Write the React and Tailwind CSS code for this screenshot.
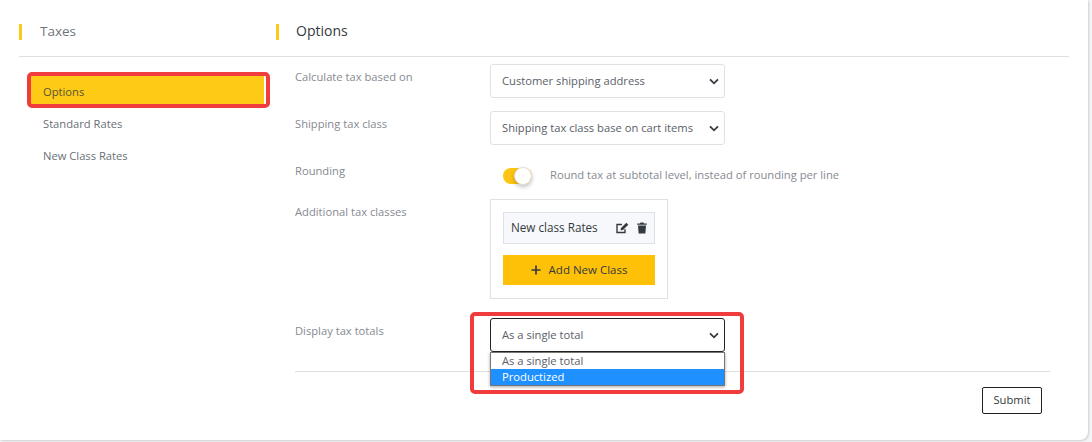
const font = { fontFamily: '"Open Sans", sans-serif' };

function Chevron() {
  return (
    <svg width="10" height="7" viewBox="0 0 12 8" fill="none" className="shrink-0">
      <path d="M1.2 1.5 L6 6.2 L10.8 1.5" stroke="#343a40" strokeWidth="2.2" />
    </svg>
  );
}

function Select({ children, dark }) {
  return (
    <div className={`flex h-[34px] w-[235px] items-center justify-between rounded-[3px] border bg-white pl-[11px] pr-[3px] text-[11.2px] text-[#5a6068] ${dark ? 'border-[#222]' : 'border-[#dee2e6]'}`}>
      <span>{children}</span>
      <span className="flex w-[14px] justify-center"><Chevron /></span>
    </div>
  );
}

function Row({ label, labelClass, children, className }) {
  return (
    <div className={`flex ${className}`}>
      <div className={`w-[195px] shrink-0 text-[11.2px] leading-[16px] text-[#868a91] ${labelClass}`}>{label}</div>
      {children}
    </div>
  );
}

export default function App() {
  return (
    <div style={font} className="h-[442px] w-[1092px] overflow-hidden bg-[#f3f4f6]">
      <div className="relative h-[440px] w-[1088px] rounded-br-[8px] bg-white pl-[19px] pt-[24px] shadow-[1px_1px_2px_rgba(0,0,0,0.15)]">
        <div className="flex h-[33px] w-[1050px] border-b border-[#dfdfdf]">
          <div className="h-[16px] w-[257px] border-l-[3px] border-[#fbc91a] pl-[18px] text-[13.5px] font-medium leading-[14px] text-[#6c757d]">Taxes</div>
          <div className="h-[16px] border-l-[3px] border-[#fbc91a] pl-[17px] text-[14px] font-medium leading-[14px] text-[#343a40]">Options</div>
        </div>

        <div className="flex">
          <nav className="w-[276px] shrink-0 pl-[12px] pr-[8px] pt-[19px] text-[11.2px] text-[#6b6f75]">
            <div className="flex h-[32px] w-[235px] items-center border-r-2 border-white bg-[#fdca16] pl-[12px] text-[#5a5338]">Options</div>
            <div className="flex h-[32px] items-center pl-[12px]">Standard Rates</div>
            <div className="flex h-[32px] items-center pl-[12px]">New Class Rates</div>
          </nav>

          <div className="w-[755px] pt-[7px]">
            <Row label="Calculate tax based on" labelClass="pt-[5px]" className="h-[47px]">
              <Select>Customer shipping address</Select>
            </Row>
            <Row label="Shipping tax class" labelClass="pt-[5px]" className="h-[47px]">
              <Select>Shipping tax class base on cart items</Select>
            </Row>
            <Row label="Rounding" labelClass="pt-[5px]" className="h-[41px]">
              <div className="ml-[13px] mt-[9px] flex h-[18px] items-center">
                <div className="relative h-[16px] w-[29px] rounded-full bg-[#fdc513]">
                  <div className="absolute right-0 top-[-1px] h-[18px] w-[18px] rounded-full border border-[#e6e0cf] bg-white shadow-[0_2px_4px_rgba(0,0,0,0.25)]" />
                </div>
                <span className="ml-[18px] -translate-y-[1px] text-[11.2px] text-[#868a91]">Round tax at subtotal level, instead of rounding per line</span>
              </div>
            </Row>
            <Row label="Additional tax classes" labelClass="pt-[5px]" className="h-[119px]">
              <div className="h-[100px] w-[178px] border border-[#dee2e6] p-[12px]">
                <div className="flex h-[32px] w-[152px] items-center justify-between border border-[#dee2e6] bg-[#f6f8fb] pl-[7px] pr-[7px] text-[11.7px] text-[#343a40]">
                  <span>New class Rates</span>
                  <span className="flex items-center gap-[8px]">
                    <svg width="13" height="12" viewBox="0 0 13 12" fill="none">
                      <path d="M9 7.2V10.5H1V2.5H6" stroke="#343a40" strokeWidth="1.4" />
                      <path d="M4.5 8.3L5 6L10.3 0.7L12.3 2.7L7 8L4.5 8.3Z" fill="#343a40" />
                    </svg>
                    <svg width="10" height="12" viewBox="0 0 10 12">
                      <path d="M0.2 1.5H3L3.5 0.4H6.5L7 1.5H9.8V2.8H0.2ZM1 3.6H9L8.4 11.6H1.6Z" fill="#343a40" />
                    </svg>
                  </span>
                </div>
                <div className="mt-[11px] flex h-[30px] items-center justify-center gap-[8px] bg-[#ffc107] text-[11.5px] text-[#343a40]">
                  <svg width="10" height="10" viewBox="0 0 10 10"><path d="M5 0.5V9.5M0.5 5H9.5" stroke="#343a40" strokeWidth="1.7" /></svg>
                  <span>Add New Class</span>
                </div>
              </div>
            </Row>
            <Row label="Display tax totals" labelClass="pt-[5px]" className="relative h-[54px] w-[755px] border-b border-[#dfdfdf]">
              <div className="relative">
                <Select dark>As a single total</Select>
                <div className="absolute left-0 top-[34px] w-[235px] border border-[#767676] bg-white text-[11.2px] leading-[16px] text-[#5a6068] shadow-[0_1px_3px_rgba(0,0,0,0.35)]">
                  <div className="pl-[11px]">As a single total</div>
                  <div className="bg-[#1e90ff] pl-[11px] text-white">Productized</div>
                </div>
              </div>
            </Row>
            <div className="flex w-[747px] justify-end pt-[15px]">
              <button className="h-[27px] w-[60px] rounded-[2px] border border-[#222] bg-white text-[11.2px] text-[#343a40]">Submit</button>
            </div>
          </div>
        </div>

        <div className="pointer-events-none absolute left-[27px] top-[72px] h-[36px] w-[243px] rounded-[5px] border-[4px] border-[#f13c3e]" />
        <div className="pointer-events-none absolute left-[470px] top-[312px] h-[82px] w-[274px] rounded-[5px] border-[4px] border-[#f13c3e]" />
      </div>
    </div>
  );
}
